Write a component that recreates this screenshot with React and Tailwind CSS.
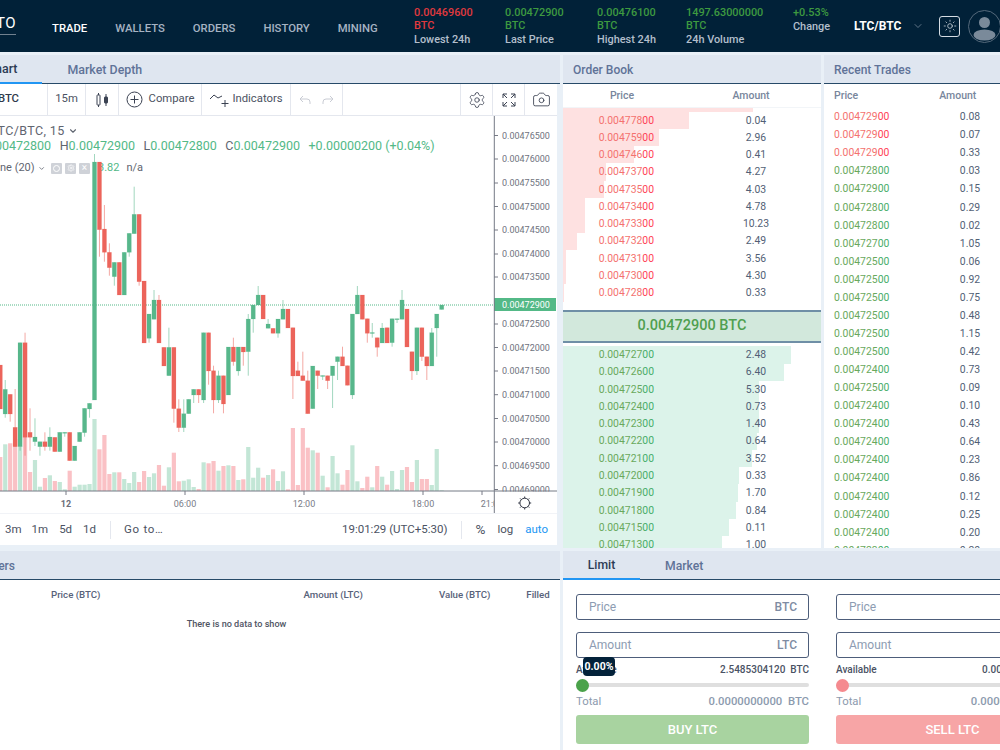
import React from "react";
import { Sun, ChevronDown, Settings, Camera } from "lucide-react";

const G = "#57b78b", R = "#ec645b";
const candles = [
["G",305,309.5],["G",314,328,0,356.7],["G",332.7,366,328],["R",356.7,366,0,380],["R",327.7,356.7,0,361],["G",327.7,371,0,375],["R",351.7,371,0,380],["R",309,347],["G",300,319.3,290],["G",318.7,319.7,318.7,323],
["G",318.7,342.7,0,346.7],["R",327.7,343],["G",328,343,323],["R",337.7,347.3,0,356.7],["G",332.5,333.5,323,337.7],["R",318.7,333.3,0,342.7],["R",295,319.3],["G",295,314,286],["G",314,395,0,399],["R",365.7,385.3],
["R",356.7,366,346.7],["G",356.7,361.7,0,380],["G",366,375.7,0,408],["R",375.7,380.7,0,389],["G",375.5,376.5,0,380],["R",370.7,375.7,0,389],["G",366,408.7],["R",380.7,413.7,370.7],["R",375.7,380.7,351.7],["R",370.7,376,361.7],
["R",327.7,376,0,399],["R",309,328],["G",309,319.3,300],["G",319,333.3,0,337.7],["R",328.3,333.3],["G",324,328.3,319],["R",295,319],["G",295,305,286],["G",305,319,0,332.7],["G",319,351.7,314,375.7],
["R",347,352,0,365.7],["G",347,371,0,375.7],["R",347,361.7,337.7,365.7],["G",347,395],["R",375.7,404,0,413.3],["G",375.7,400,370.7,403],["R",370.7,400,365.7,413.3],["R",332.7,371,0,384.7],["G",332.7,400,0,403],["R",389.3,395,0,403],
["G",389.3,395,0,403],["G",399.3,413.7],["G",413.7,427.7,399.3,432],["R",408.7,427.7,399.3,432],["R",347.3,408.7,0,422.7],["G",347.3,375.7,327.7],["R",347.3,366],["R",300,343,295],["G",300,319.3,290],["G",314,338.3,0,342.7],
["R",281,343],["R",214.3,281.7,0,285.7],["G",214.3,233.7,186.7],["G",233.3,252.3,0,256.7],["G",252.3,295],["R",262.3,295],["G",262.3,276.7,0,285.7],["R",252.3,267.7,243.3,275.7],["R",229,252.3,205,261.7],["R",162,229.7,0,256.7],
["G",162,400,154],["G",403.3,409,0,417.7],["G",408.3,432.7,0,436.7],["G",432.3,441.7],["G",446,460.7],["R",432.3,460.7],["G",432.3,433.3,0,436.7],["G",432.3,451.7],["R",437.3,451.7],["G",437,446.7,427.3,450.7],
["R",441.7,446.7,432.3,450.7],["G",441.7,446.7,0,455.7],["G",437,441.7,418.3,446],["R",432.3,437.3,408.3,450.7],["R",342.7,437.3,332.7,455.7],["G",342.7,446.7,0,450.7],["R",427.3,446.7,389],["R",394.3,414,0,421.7],["G",389.3,414,380,417.7],["R",365,409],
];
const vols = [
490.3,449,485,479,479,460,482,467,470,489,471,484.7,476.7,466,487.3,476.7,488,481.3,445.3,470,484.7,473.3,456,487.3,475.7,452.7,450.3,447.7,428,
485,428,489.3,471.3,481,469.3,475,477.7,467.7,477.7,447,479.3,480,466,465.3,466,470.7,461,463.3,462.3,489,487,479.3,480.7,481.3,452.7,467.3,485.7,465,473.3,477,471,482,472,483,
479,472.3,472.3,474,435,449.3,419,484,484.7,484.7,486.7,470.7,489.3,482,481,475.3,478,486.7,460,472,433,446.7,439,443.3,444.3,457,
];
const priceLabels = [
["0.00476500",135.5],["0.00476000",159],["0.00475500",183],["0.00475000",206.5],["0.00474500",230],["0.00474000",254],["0.00473500",277],["0.00472500",324],["0.00472000",347.5],["0.00471500",371],["0.00471000",394.7],["0.00470500",418.5],["0.00470000",442],["0.00469500",465.7],["0.00469000",489.5],
];

function Chart() {
  return (
    <svg width="557" height="397" viewBox="0 116 557 397" className="block relative z-10">
      <line x1="0" x2="494" y1="305" y2="305" stroke="#53b987" strokeWidth="1" strokeDasharray="1 1" />
      {vols.map((t, i) => {
        const x = 441.7 - 4.96 * i;
        return <rect key={i} x={x - 2.1} y={t} width="4.2" height={491 - t} fill={candles[i][0] === "G" ? "#c3e6d6" : "#fac1c5"} />;
      })}
      {candles.map((c, i) => {
        const x = 441.7 - 4.96 * i;
        const col = c[0] === "G" ? G : R;
        const hi = c[3] || c[1];
        const lo = c[4] || c[2];
        return (
          <g key={i}>
            <line x1={x} x2={x} y1={hi} y2={lo} stroke={col} strokeWidth="1" opacity="0.55" />
            <rect x={x - 2.1} y={c[1]} width="4.2" height={Math.max(c[2] - c[1], 1)} fill={col} stroke={col} strokeOpacity="0.25" strokeWidth="0.6" />
          </g>
        );
      })}
      {[66, 185, 304, 423, 482].map((x) => (
        <line key={x} x1={x} x2={x} y1="491" y2="495" stroke="#787b86" />
      ))}
      <g fontSize="9" fill="#787b86" textAnchor="middle">
        <text x="66" y="507" fontWeight="700" fill="#6a6d78">12</text>
        <text x="185" y="507">06:00</text>
        <text x="304" y="507">12:00</text>
        <text x="423" y="507">18:00</text>
        <text x="492" y="507">21:00</text>
      </g>
      <g fontSize="9" fill="#6f7380">
        {priceLabels.map(([t, y]) => (
          <g key={t}>
            <line x1="494" x2="498" y1={y} y2={y} stroke="#787b86" />
            <text x="502" y={y + 3.2}>{t}</text>
          </g>
        ))}
      </g>
      <rect x="494" y="298" width="62" height="13" fill="#53b987" />
      <text x="502" y="308.2" fontSize="9" fill="#ffffff">0.00472900</text>
      <rect x="494.5" y="491.5" width="63" height="22" fill="#ffffff" />
      <line x1="494.3" x2="494.3" y1="116" y2="513" stroke="#757a85" />
      <line x1="0" x2="557" y1="491" y2="491" stroke="#757a85" />
      <g stroke="#2f3442" strokeWidth="1" fill="none">
        <circle cx="524.7" cy="503" r="4.8" />
        <path d="M524.7 496.5v1.7M524.7 507.8v1.7M518.2 503h1.7M529.5 503h1.7M520.1 498.4l1.2 1.2M528.1 506.4l1.2 1.2M520.1 507.6l1.2-1.2M528.1 499.6l1.2-1.2" />
      </g>
    </svg>
  );
}

function Sep({ w, children, last }) {
  return (
    <div className={`flex items-center justify-center h-full shrink-0 ${w} ${last ? "" : "border-r border-[#e4e7ee]"}`}>{children}</div>
  );
}

function Toolbar() {
  return (
    <div className="flex items-stretch h-[32px] border-b border-[#e4e7ee] bg-white text-[11.3px] text-[#4b5262] shrink-0">
      <div className="flex items-center justify-end w-[48px] shrink-0 border-r border-[#e4e7ee] pr-[28px] font-medium text-[#2f3a4c] overflow-hidden whitespace-nowrap">BTC</div>
      <Sep w="w-[38px]">15m</Sep>
      <Sep w="w-[33px]">
        <svg width="13" height="16" viewBox="0 0 13 16" fill="none" stroke="#3b4252" strokeWidth="1">
          <rect x="1" y="3" width="3" height="10" rx="0.5" />
          <path d="M2.5 1v2M2.5 13v2M10 2v3M10 11v3" />
          <rect x="8.5" y="5" width="3" height="6" rx="0.5" fill="#3b4252" />
        </svg>
      </Sep>
      <Sep w="w-[83px]">
        <span className="flex items-center gap-[6px] whitespace-nowrap">
          <svg width="17" height="17" viewBox="0 0 17 17" fill="none" stroke="#3b4252" strokeWidth="1">
            <circle cx="8.5" cy="8.5" r="7.5" />
            <path d="M8.5 4.5v8M4.5 8.5h8" />
          </svg>
          Compare
        </span>
      </Sep>
      <Sep w="w-[89px]">
        <span className="flex items-center gap-[3px] whitespace-nowrap">
          <svg width="20" height="16" viewBox="0 0 20 16" fill="none" stroke="#3b4252" strokeWidth="1">
            <path d="M1 7l4-4 4 3 4-2" />
            <path d="M16 8v7M12.5 11.5h7" />
          </svg>
          Indicators
        </span>
      </Sep>
      <Sep w="w-[52px]">
        <span className="flex items-center gap-[11px]">
          <svg width="12" height="10" viewBox="0 0 12 10" fill="none" stroke="#c9ccd4" strokeWidth="1"><path d="M4 1L1 4l3 3M1 4h7a3 3 0 013 3v2" /></svg>
          <svg width="12" height="10" viewBox="0 0 12 10" fill="none" stroke="#c9ccd4" strokeWidth="1"><path d="M8 1l3 3-3 3M11 4H4a3 3 0 00-3 3v2" /></svg>
        </span>
      </Sep>
      <div className="flex-1 border-r border-[#e4e7ee]" />
      <Sep w="w-[32px]"><Settings size={18} strokeWidth={1.1} color="#3b4252" /></Sep>
      <Sep w="w-[32px]">
        <svg width="14" height="14" viewBox="0 0 14 14" fill="none" stroke="#3b4252" strokeWidth="1">
          <path d="M1 5V1h4M1 1l4 4M13 5V1H9M13 1L9 5M1 9v4h4M1 13l4-4M13 9v4H9M13 13L9 9" />
        </svg>
      </Sep>
      <Sep w="w-[32px]" last><Camera size={19} strokeWidth={1.1} color="#3b4252" /></Sep>
    </div>
  );
}

function Legend() {
  return (
    <div className="absolute left-0 top-[6px] w-[494px] overflow-hidden text-[12.5px] leading-[18px] whitespace-nowrap text-[#5f6570]">
      <div className="flex items-center gap-[3px] -ml-[8px] tracking-[0.4px]">LTC/BTC, 15 <ChevronDown size={10} strokeWidth={2.6} /></div>
      <div className="-ml-[24px] -mt-[4px] h-[20px] leading-[20px] flex">
        <span className="mr-[8.5px]">O<span className="text-[#53b987]">0.00472800</span></span>
        <span className="mr-[8.5px]">H<span className="text-[#53b987]">0.00472900</span></span>
        <span className="mr-[8.5px]">L<span className="text-[#53b987]">0.00472800</span></span>
        <span className="mr-[8.5px]">C<span className="text-[#53b987]">0.00472900</span></span>
        <span className="text-[#53b987]">+0.00000200 (+0.04%)</span>
      </div>
      <div className="flex items-center text-[11px] h-[20px] mt-[2px]">
        <span className="flex items-center gap-[3px] w-[51px] shrink-0 justify-end pr-[6px]">ne (20) <ChevronDown size={11} strokeWidth={2.6} /></span>
        <span className="flex gap-[3px] mr-[8px]">
          <span className="w-[11px] h-[11px] bg-[#cfd2d8] rounded-[1px] flex items-center justify-center"><span className="w-[7px] h-[7px] rounded-full border border-white" /></span>
          <span className="w-[11px] h-[11px] bg-[#cfd2d8] rounded-[1px] flex items-center justify-center"><Settings size={8} color="#fff" /></span>
          <span className="w-[11px] h-[11px] bg-[#cfd2d8] rounded-[1px] flex items-center justify-center text-white text-[10px] leading-none">×</span>
        </span>
        <span className="text-[#53b987] mr-[7px]">3.82</span>
        <span>n/a</span>
      </div>
    </div>
  );
}

const ask = [["0.004778","0.04",689],["0.004759","2.96",659],["0.004746","0.41",633.7],["0.004737","4.27",606],["0.004735","4.03",604],["0.004734","4.78",585],["0.004733","10.23",585],["0.004732","2.49",577],["0.004731","3.56",566],["0.004730","4.30",566],["0.004728","0.33",564]];
const bid = [["0.004727","2.48",790.7],["0.004726","6.40",784],["0.004725","5.30",759],["0.004724","0.73",759],["0.004723","1.40",759],["0.004722","0.64",757],["0.004721","3.52",751.7],["0.004720","0.33",738.7],["0.004719","1.70",737.7],["0.004718","0.84",736],["0.004715","0.11",728.7],["0.004713","1.00",722],["0.004712","0.20",722]];

function Price({ v, red }) {
  return (
    <span className={red ? "text-[#f4726f]" : "text-[#69a95c]"}>
      {v}
      <span className={red ? "text-[#ff3f56]" : "text-[#47ae6a]"}>00</span>
    </span>
  );
}

function BookRow({ r, red }) {
  return (
    <div className="relative h-[17.27px] flex items-center text-[10.4px] shrink-0">
      <div className={`absolute left-0 top-0 bottom-0 ${red ? "bg-[#fee1e1]" : "bg-[#dcf3ea]"}`} style={{ width: r[2] - 563 }} />
      <div className="relative w-[91px] text-right"><Price v={r[0]} red={red} /></div>
      <div className="relative ml-[77px] w-[50px] text-center text-[#525f76]">{r[1]}</div>
    </div>
  );
}

const trades = [["0.004729","0.08",1],["0.004729","0.07",1],["0.004729","0.33",1],["0.004728","0.03"],["0.004729","0.15"],["0.004728","0.29"],["0.004728","0.02"],["0.004727","1.05"],["0.004725","0.06"],["0.004725","0.92"],["0.004725","0.75"],["0.004725","0.48"],["0.004725","1.15"],["0.004725","0.42"],["0.004724","0.73"],["0.004725","0.09"],["0.004724","0.10"],["0.004724","0.43"],["0.004724","0.64"],["0.004724","0.23"],["0.004724","0.86"],["0.004724","0.12"],["0.004724","0.25"],["0.004724","0.20"],["0.004723","0.20"]];

function Head({ children }) {
  return (
    <div className="h-[29px] bg-[#dfe6f0] border-b border-[#274a68] flex items-center pl-[10px] pt-[2px] text-[12px] font-medium text-[#5f7398] shrink-0 whitespace-nowrap">{children}</div>
  );
}

function Form({ unit1, unit2, sell }) {
  return (
    <div className="w-[233px] shrink-0 flex flex-col text-[10px]">
      <div className="h-[26px] border border-[#4d5d7a] rounded-[3px] flex items-center justify-between pl-[12px] pr-[11px] text-[12px]">
        <span className="text-[#8d9cb2]">Price</span>
        <span className="text-[#7e8ca3] font-medium text-[12px]">{unit1}</span>
      </div>
      <div className="h-[26px] mt-[12px] border border-[#4d5d7a] rounded-[3px] flex items-center justify-between pl-[12px] pr-[11px] text-[12px]">
        <span className="text-[#8d9cb2]">Amount</span>
        <span className="text-[#7e8ca3] font-medium text-[12px]">{unit2}</span>
      </div>
      <div className="relative flex justify-between items-center h-[16px] mt-[3px] text-[#4a5264] font-medium">
        <span>Available</span>
        <span>{sell ? "0.0000000000" : "2.5485304120"}&nbsp; {sell ? "LTC" : "BTC"}</span>
        {!sell && (
          <span className="absolute left-[7px] -top-[4px] w-[32px] h-[19px] bg-[#03223a] rounded-[4px] text-white font-bold text-[10.5px] flex items-center justify-center">0.00%</span>
        )}
      </div>
      <div className="relative h-[4px] bg-[#dfdfdf] rounded-full mt-[6px]">
        <span className={`absolute left-0 -top-[4.5px] w-[13px] h-[13px] rounded-full ${sell ? "bg-[#f58a8f]" : "bg-[#4aa24a]"}`} />
      </div>
      <div className="flex justify-between items-center h-[16px] mt-[7px] text-[#8c9aae] text-[11.3px]">
        <span>Total</span>
        <span className="font-medium">0.0000000000&nbsp; {sell ? "LTC" : "BTC"}</span>
      </div>
      <div className={`h-[29px] mt-[5px] rounded-[3px] flex items-center justify-center text-white text-[13px] font-medium ${sell ? "bg-[#f7a5a6]" : "bg-[#a8d3a0]"}`}>
        {sell ? "SELL LTC" : "BUY LTC"}
      </div>
    </div>
  );
}

function Stat({ a, c, w, red }) {
  return (
    <div className={`${w} shrink-0 text-[10.9px] leading-[13.6px] font-medium`}>
      <div className={red ? "text-[#e0393e]" : "text-[#3e9a40]"}>{a}</div>
      <div className={red ? "text-[#e0393e]" : "text-[#3e9a40]"}>BTC</div>
      <div className="text-[#b3bfcc]">{c}</div>
    </div>
  );
}

export default function App() {
  return (
    <div className="w-[1000px] h-[750px] overflow-hidden bg-[#e9f0f7] [font-family:Roboto,sans-serif] flex flex-col">
      <header className="h-[52px] shrink-0 bg-[#012138] flex items-center">
        <div className="w-[52px] shrink-0 flex flex-col items-start -mt-[2px]">
          <div className="w-[16px] overflow-hidden flex justify-end">
            <span className="text-white text-[15px] leading-[16px] tracking-[0.5px] whitespace-nowrap">CRYPTO</span>
          </div>
          <div className="w-[16px] h-px bg-[#71818f] mt-[3px]" />
        </div>
        <nav className="w-[362px] shrink-0 flex gap-7 text-[11.3px] font-medium text-[#a6b3c3] mt-[6px]">
          <span className="text-white">TRADE</span>
          <span>WALLETS</span>
          <span>ORDERS</span>
          <span>HISTORY</span>
          <span>MINING</span>
        </nav>
        <Stat a="0.00469600" c="Lowest 24h" w="w-[91px]" red />
        <Stat a="0.00472900" c="Last Price" w="w-[92px]" />
        <Stat a="0.00476100" c="Highest 24h" w="w-[89px]" />
        <Stat a="1497.63000000" c="24h Volume" w="w-[107px]" />
        <div className="w-[61px] shrink-0 text-[10.9px] leading-[13.6px] font-medium -mt-[13px]">
          <div className="text-[#3e9a40]">+0.53%</div>
          <div className="text-[#b3bfcc]">Change</div>
        </div>
        <div className="text-white text-[12px] font-bold w-[58px] shrink-0">LTC/BTC</div>
        <ChevronDown size={12} color="#7f8fa0" strokeWidth={1.5} className="shrink-0" />
        <div className="ml-[15px] w-[21px] h-[21px] border border-[#d5dce3] rounded-[3px] flex items-center justify-center shrink-0">
          <Sun size={14} color="#e3e8ed" strokeWidth={1.2} />
        </div>
        <svg width="33" height="33" viewBox="0 0 33 33" className="ml-[8px] shrink-0">
          <circle cx="16.5" cy="16.5" r="16" fill="none" stroke="#55697b" />
          <circle cx="16.5" cy="12.5" r="5.5" fill="#7a8a9a" />
          <ellipse cx="16.5" cy="25" rx="11" ry="5.5" fill="#7a8a9a" />
        </svg>
      </header>

      <main className="flex-1 mt-[3px] flex min-h-0">
        <section className="w-[560px] shrink-0 flex flex-col">
          <div className="h-[29px] bg-[#dfe6f0] border-b border-[#274a68] flex text-[12.4px] font-medium shrink-0">
            <div className="-ml-[38px] px-[25px] pt-[2px] h-[29px] flex items-center border-b-2 border-[#2196f3] text-[#2c3b54]">Chart</div>
            <div className="px-[25px] pt-[2px] flex items-center text-[#5f7398]">Market Depth</div>
          </div>
          <div className="w-[557px] shrink-0 bg-white flex flex-col">
            <Toolbar />
            <div className="relative h-[397px] shrink-0">
              <Legend />
              <Chart />
            </div>
            <div className="h-[32px] rounded-br-[3px] border-t border-[#f1f3f7] flex items-center text-[11.5px] text-[#4b5262] whitespace-nowrap">
              <span className="ml-[5px]">3m</span>
              <span className="ml-[10px]">1m</span>
              <span className="ml-[11px]">5d</span>
              <span className="ml-[11px]">1d</span>
              <span className="ml-[14px] h-[18px] w-px bg-[#e4e7ee]" />
              <span className="ml-[13px] tracking-[0.7px]">Go to…</span>
              <span className="ml-auto">19:01:29 (UTC+5:30)</span>
              <span className="ml-[14px] h-[18px] w-px bg-[#e4e7ee]" />
              <span className="ml-[13px] text-[13.5px]">%</span>
              <span className="ml-[12px]">log</span>
              <span className="ml-[12px] mr-[9px] text-[#2196f3]">auto</span>
            </div>
          </div>
          <div className="mt-[6px] flex-1 bg-white flex flex-col min-h-0">
            <div className="h-[29px] bg-[#dfe6f0] border-b border-[#274a68] flex items-center pt-[2px] text-[12px] font-medium text-[#5f7398] shrink-0 overflow-hidden">
              <span className="-ml-[21px] whitespace-nowrap">Orders</span>
            </div>
            <div className="flex h-[30px] items-center text-[9.7px] font-medium text-[#58627a] whitespace-nowrap shrink-0">
              <span className="ml-[51px]">Price (BTC)</span>
              <span className="ml-[203px]">Amount (LTC)</span>
              <span className="ml-[76px]">Value (BTC)</span>
              <span className="ml-[36px]">Filled</span>
            </div>
            <div className="text-center text-[9.1px] font-medium text-[#4f5463] w-[473px] pt-[8px]">There is no data to show</div>
          </div>
        </section>

        <section className="ml-[3px] w-[437px] flex flex-col min-w-0">
          <div className="h-[493px] shrink-0 flex overflow-hidden">
            <div className="w-[258px] shrink-0 bg-white flex flex-col overflow-hidden">
              <Head>Order Book</Head>
              <div className="h-[23px] flex items-center text-[10.5px] font-medium text-[#78869c] shrink-0">
                <span className="w-[118px] text-center">Price</span>
                <span className="ml-[45px] w-[50px] text-center">Amount</span>
              </div>
              <div className="h-px bg-[#f2f5f8] shrink-0" />
              <div className="h-[3.7px] w-[190px] bg-[#fee1e1] shrink-0" />
              {ask.map((r) => <BookRow key={r[0]} r={r} red />)}
              <div className="h-[8px] shrink-0" />
              <div className="h-[33px] shrink-0 bg-[#d2e8dc] border-y-2 border-[#6f8fa6] flex items-center justify-center text-[14.5px] font-medium text-[#4f9f50]">0.00472900 BTC</div>
              <div className="h-[3.7px] shrink-0" />
              {bid.map((r) => <BookRow key={r[0]} r={r} />)}
            </div>
            <div className="ml-[3px] w-[176px] shrink-0 bg-white flex flex-col overflow-hidden">
              <Head>Recent Trades</Head>
              <div className="h-[24px] flex items-center text-[10.5px] font-medium text-[#78869c] shrink-0">
                <span className="ml-[10px]">Price</span>
                <span className="ml-[81px]">Amount</span>
              </div>
              {trades.map((t, i) => (
                <div key={i} className="h-[18.07px] shrink-0 flex items-center text-[10.4px]">
                  <span className="ml-[10px] w-[54px]"><Price v={t[0]} red={t[2]} /></span>
                  <span className="ml-[62px] w-[40px] text-center text-[#525f76]">{t[1]}</span>
                </div>
              ))}
            </div>
          </div>
          <div className="mt-[3px] flex-1 bg-white flex flex-col min-h-0 overflow-hidden">
            <div className="h-[29px] bg-[#dfe6f0] border-b border-[#274a68] flex text-[12.2px] font-medium shrink-0">
              <div className="w-[77px] h-[29px] pt-[2px] flex items-center justify-center border-b-2 border-[#2196f3] text-[#2c3b54]">Limit</div>
              <div className="ml-[25px] pt-[2px] flex items-center text-[#5f7398]">Market</div>
            </div>
            <div className="flex gap-[27px] pl-[13px] pt-[14px]">
              <Form unit1="BTC" unit2="LTC" />
              <Form unit1="BTC" unit2="LTC" sell />
            </div>
          </div>
        </section>
      </main>
    </div>
  );
}
